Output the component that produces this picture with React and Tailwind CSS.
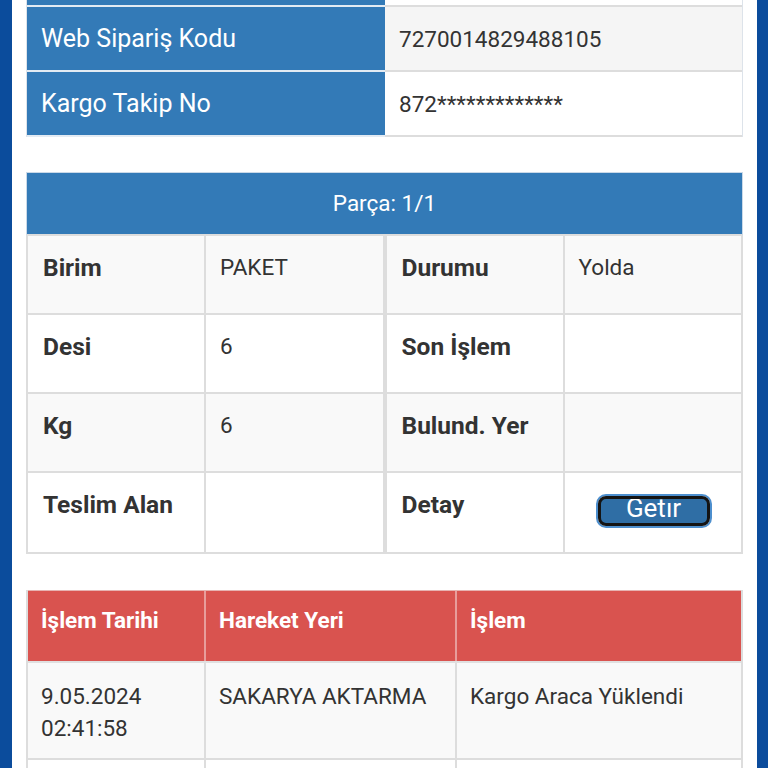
import React from "react";

function PartHalf({ rows }) {
  return (
    <div className="flex flex-col border-2 border-t-0 border-[#ddd]">
      {rows.map((r, i) => (
        <div
          key={i}
          className={`grid grid-cols-[176px_2px_176px] h-[79px] ${i < rows.length - 1 ? "border-b-2 border-[#ddd]" : ""} ${i % 2 === 0 ? "bg-[#f9f9f9]" : "bg-white"}`}
        >
          <div className="pl-[15px] pt-[16px] font-bold text-[24.5px] leading-[32px] text-[#333]">{r[0]}</div>
          <div className="bg-[#ddd]" />
          <div className="pl-[14px] pt-[15px] text-[22.5px] leading-[32px] text-[#333]">
            {r[1] === "BTN" ? (
              <div className="flex justify-center pt-[6px] pr-[12px]">
                <div className="rounded-[10px] border-2 border-[#4d8fce] bg-white">
                  <div className="rounded-[8px] border-[3px] border-[#141414] bg-[#2f6ea5] w-[112px] h-[30px] overflow-hidden flex justify-center">
                    <span className="block text-white text-[26px] leading-[19px]">Getır</span>
                  </div>
                </div>
              </div>
            ) : (
              r[1]
            )}
          </div>
        </div>
      ))}
    </div>
  );
}

export default function App() {
  return (
    <div className="h-[768px] overflow-hidden flex font-[Roboto,sans-serif] text-[#333] bg-white">
      <div className="w-[12px] shrink-0 bg-[#0b4c9c]" />
      <div className="flex-1 px-[14px] flex flex-col">
        {/* Top table */}
        <div className="flex flex-col border-x border-[#dde3ea]">
          <div className="grid grid-cols-[358px_1fr] h-[7px]">
            <div className="bg-[#337ab7] border-b-2 border-[#e3ebf3]" />
            <div className="bg-white border-b-2 border-[#ddd]" />
          </div>
          <div className="grid grid-cols-[358px_1fr] h-[65px]">
            <div className="bg-[#337ab7] border-b-2 border-[#e3ebf3] flex items-center px-[14px] pt-[1px] text-white text-[25px] leading-[32px]">
              Web Sipariş Kodu
            </div>
            <div className="bg-[#f5f5f5] border-b-2 border-[#ddd] flex items-center px-[14px] pt-[1px] text-[22.5px] leading-[32px]">
              7270014829488105
            </div>
          </div>
          <div className="grid grid-cols-[358px_1fr] h-[65px]">
            <div className="bg-[#337ab7] border-b-2 border-[#e3ebf3] flex items-center px-[14px] pt-[1px] text-white text-[25px] leading-[32px]">
              Kargo Takip No
            </div>
            <div className="bg-white border-b-2 border-[#ddd] flex items-center px-[14px] pt-[1px] text-[22.5px] leading-[32px]">
              872*************
            </div>
          </div>
        </div>

        {/* Parça table */}
        <div className="mt-[35px] flex flex-col">
          <div className="h-[64px] bg-[#337ab7] border border-[#cad9e8] border-b-2 border-b-[#ddd] flex items-center justify-center text-white text-[22.5px]">
            Parça: 1/1
          </div>
          <div className="grid grid-cols-2">
            <PartHalf rows={[["Birim", "PAKET"], ["Desi", "6"], ["Kg", "6"], ["Teslim Alan", ""]]} />
            <PartHalf rows={[["Durumu", "Yolda"], ["Son İşlem", ""], ["Bulund. Yer", ""], ["Detay", "BTN"]]} />
          </div>
        </div>

        {/* Hareket table */}
        <div className="mt-[36px] flex flex-col border-x-2 border-[#ddd]">
          <div className="grid grid-cols-[178px_251px_1fr] h-[73px] bg-[#d9534f] border-t border-[#e7b3b1] border-b-2 border-b-[#e0e0e0]">
            <div className="border-r-2 border-[#e89d9b] pl-[13px] pt-[13px] font-bold text-white text-[22.5px] leading-[32px]">İşlem Tarihi</div>
            <div className="border-r-2 border-[#e89d9b] pl-[13px] pt-[13px] font-bold text-white text-[22.5px] leading-[32px]">Hareket Yeri</div>
            <div className="pl-[13px] pt-[13px] font-bold text-white text-[22.5px] leading-[32px]">İşlem</div>
          </div>
          <div className="grid grid-cols-[178px_251px_1fr] h-[97px] bg-[#f9f9f9] border-b-2 border-[#ddd]">
            <div className="border-r-2 border-[#ddd] pl-[13px] pt-[17px] text-[22.5px] leading-[32px]">
              9.05.2024
              <br />
              02:41:58
            </div>
            <div className="border-r-2 border-[#ddd] pl-[13px] pt-[17px] text-[22.5px] leading-[32px]">SAKARYA AKTARMA</div>
            <div className="pl-[13px] pt-[17px] text-[22.5px] leading-[32px]">Kargo Araca Yüklendi</div>
          </div>
          <div className="grid grid-cols-[178px_251px_1fr] h-[97px] bg-white">
            <div className="border-r-2 border-[#ddd]" />
            <div className="border-r-2 border-[#ddd]" />
            <div />
          </div>
        </div>
      </div>
      <div className="w-[11px] shrink-0 bg-[#0b4c9c]" />
    </div>
  );
}
